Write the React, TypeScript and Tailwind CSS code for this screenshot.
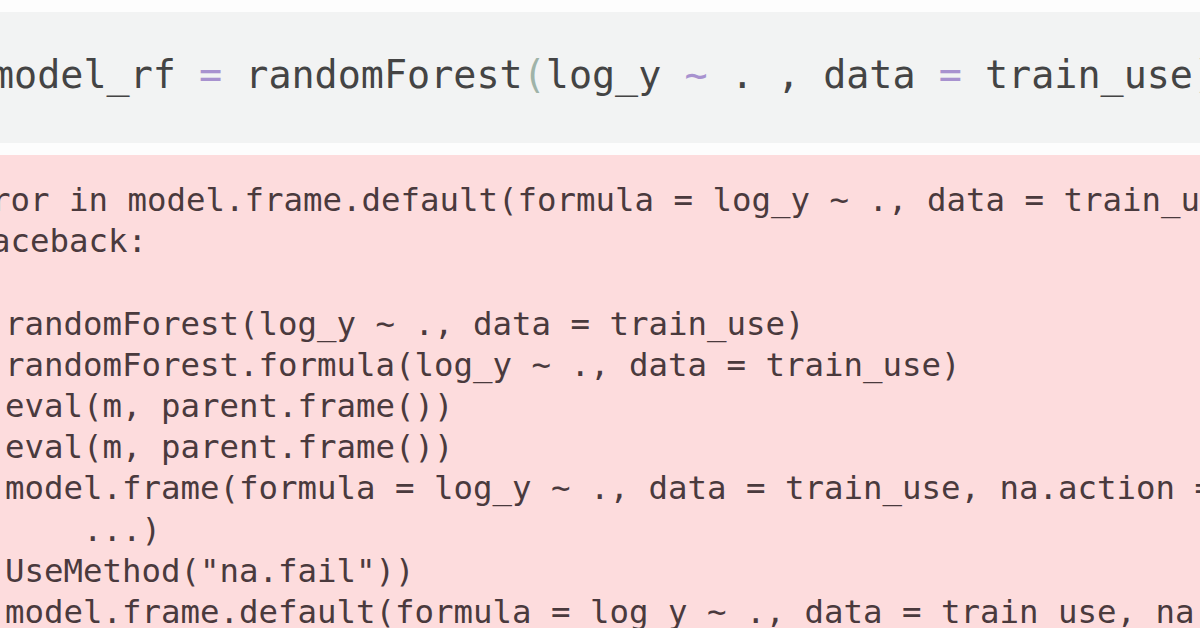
import React from "react";

const mono = { fontFamily: '"DejaVu Sans Mono", "Liberation Mono", monospace' };

export default function App() {
  const trace = [
    "randomForest(log_y ~ ., data = train_use)",
    "randomForest.formula(log_y ~ ., data = train_use)",
    "eval(m, parent.frame())",
    "eval(m, parent.frame())",
    "model.frame(formula = log_y ~ ., data = train_use, na.action = na.fail, ",
    "    ...)",
    'UseMethod("na.fail"))',
    "model.frame.default(formula = log_y ~ ., data = train_use, na.action = na.fail, ",
  ];
  return (
    <div className="w-[1200px] h-[628px] overflow-hidden bg-[#fdfdfd] flex flex-col">
      <div className="mt-[12px] h-[131px] shrink-0 bg-[#f2f3f3] pt-[40px] overflow-hidden">
        <div
          className="ml-[-9px] whitespace-pre text-[38.4px] leading-[46px] text-[#444]"
          style={mono}
        >
          <span>model_rf </span>
          <span className="text-[#a892cf]">=</span>
          <span> randomForest</span>
          <span className="text-[#9fb3a8]">(</span>
          <span>log_y </span>
          <span className="text-[#a892cf]">~</span>
          <span> . , data </span>
          <span className="text-[#a892cf]">=</span>
          <span> train_use</span>
          <span className="text-[#9fb3a8]">)</span>
        </div>
      </div>
      <div className="mt-[12px] flex-1 bg-[#fddcdd] pt-[25px] overflow-hidden">
        <div
          className="ml-[-48px] whitespace-pre text-[32.4px] leading-[41.2px] text-[#4a3a3d]"
          style={mono}
        >
          <div>Error in model.frame.default(formula = log_y ~ ., data = train_use, : missing values</div>
          <div>Traceback:</div>
          <div>&nbsp;</div>
          <div className="pl-[53px]">
            {trace.map((t, i) => (
              <div key={i}>{t}</div>
            ))}
          </div>
        </div>
      </div>
    </div>
  );
}
